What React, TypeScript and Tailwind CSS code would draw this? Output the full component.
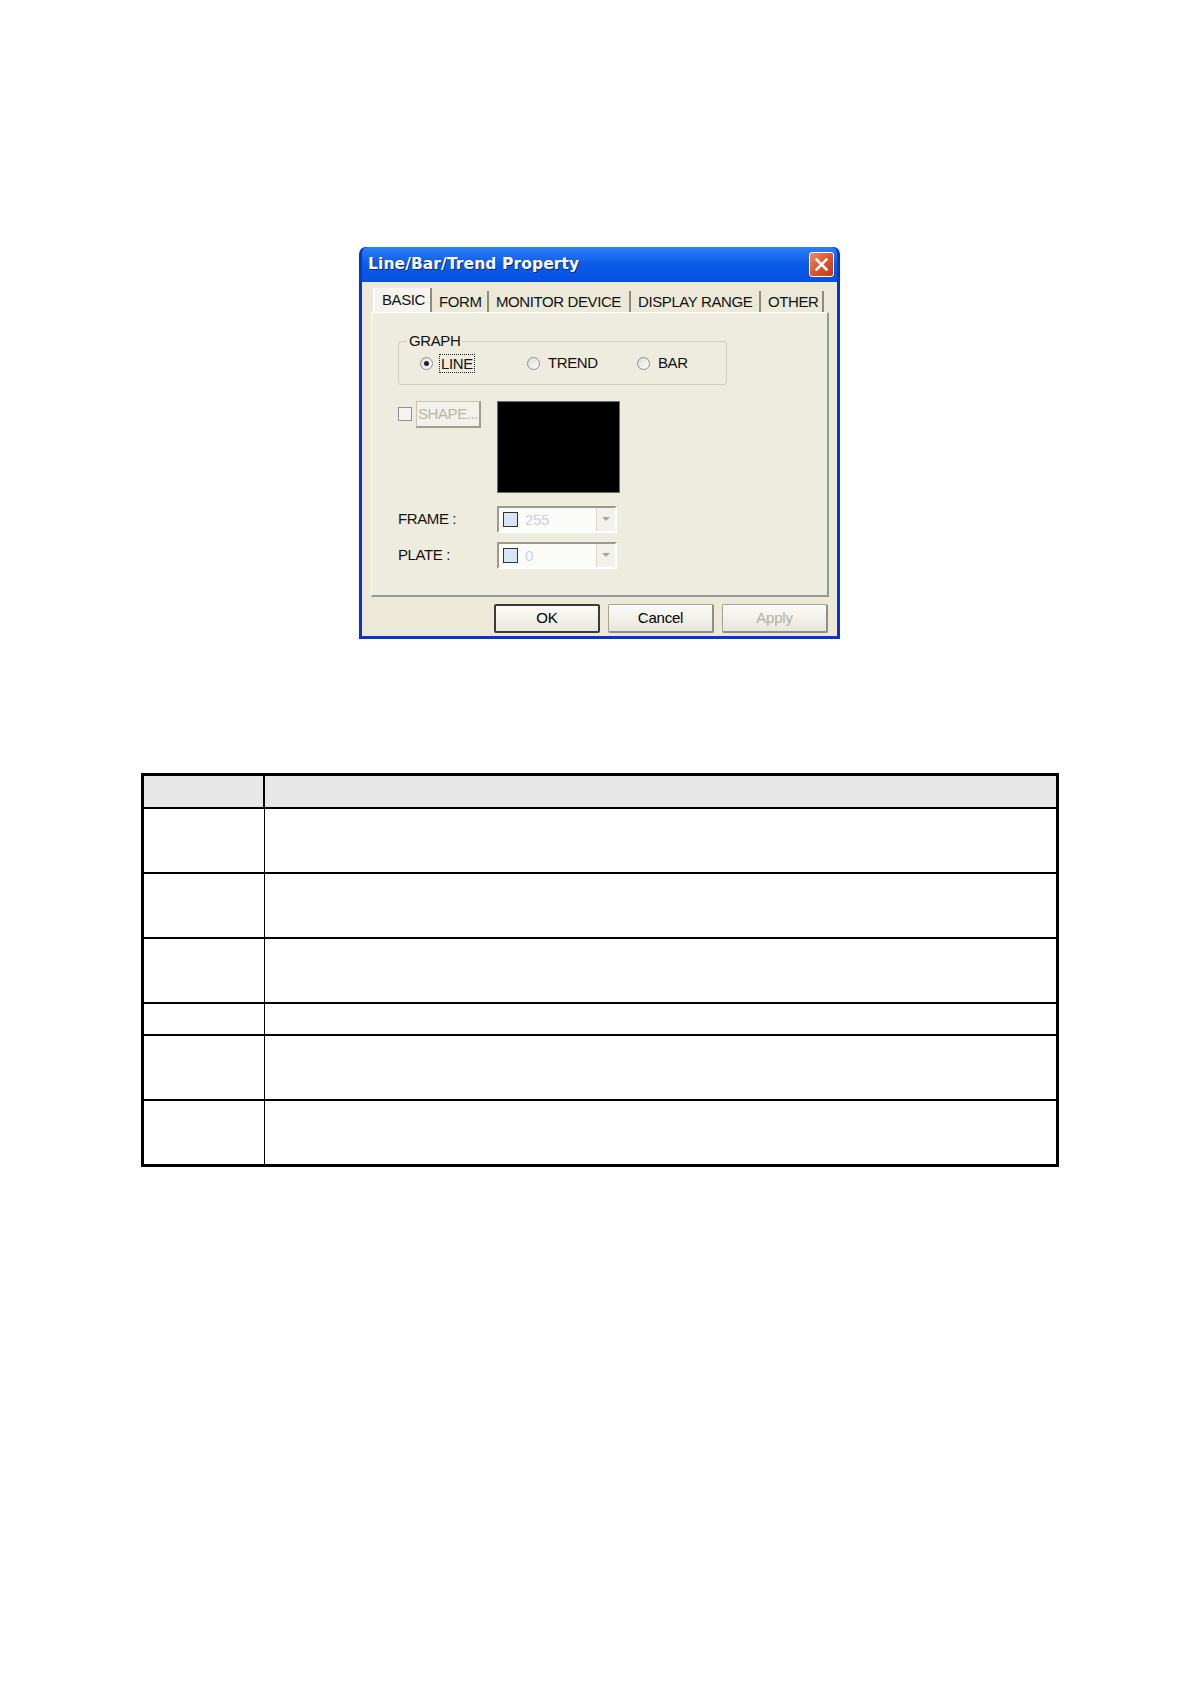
import React from 'react'

const tabs = [
  { label: 'BASIC', w: 59, active: true },
  { label: 'FORM', w: 57 },
  { label: 'MONITOR DEVICE', w: 142 },
  { label: 'DISPLAY RANGE', w: 130 },
  { label: 'OTHER', w: 63 },
]

const rowHeights = [63, 63, 63, 30, 63, 63]

function Radio({ checked }: { checked?: boolean }) {
  return (
    <span className="flex h-[13px] w-[13px] items-center justify-center rounded-full border border-[#8e8f8f] bg-gradient-to-br from-[#dcdcd7] to-white">
      {checked && <span className="h-[5px] w-[5px] rounded-full bg-[#222]" />}
    </span>
  )
}

function ColorCombo({ value }: { value: string }) {
  return (
    <div className="flex h-[27px] w-[120px] items-stretch border-2 border-t-[#9c9a8d] border-l-[#9c9a8d] border-r-[#fff] border-b-[#fff] bg-[#fbfbf8]">
      <div className="flex flex-1 items-center gap-[7px] pl-[4px]">
        <span className="h-[15px] w-[15px] border border-[#333] bg-[#d9e4f6]" />
        <span className="text-[15px] leading-none text-[#c9d1e2]">{value}</span>
      </div>
      <div className="flex w-[19px] items-center justify-center border-l border-[#d8d6c8] bg-[#f2f1eb]">
        <svg width="8" height="5" viewBox="0 0 8 5">
          <path d="M0 0h8L4 4z" fill="#a7a699" />
        </svg>
      </div>
    </div>
  )
}

function Button({ label, primary, disabled }: { label: string; primary?: boolean; disabled?: boolean }) {
  return (
    <div
      className={
        'flex h-[29px] w-[106px] items-center justify-center rounded-[2px] bg-gradient-to-b from-[#fbfbf8] to-[#e9e7dc] text-[15px] tracking-[-0.2px] ' +
        (primary
          ? 'border-2 border-[#3a3a36] text-black'
          : 'border border-[#a4a292] border-r-2 border-b-2 border-r-[#8f8e80] border-b-[#8f8e80] ') +
        (disabled ? ' text-[#b3b1a3]' : ' text-black')
      }
    >
      {label}
    </div>
  )
}

function Dialog() {
  return (
    <div className="ml-[359px] mt-[247px] flex h-[392px] w-[481px] flex-col rounded-t-[7px] border-x-[3px] border-b-[3px] border-[#0835d0] bg-[#0835d0] font-['Liberation_Sans',Arial,sans-serif]">
      <div className="flex h-[35px] items-center justify-between rounded-t-[6px] bg-gradient-to-b from-[#2c7ff7] via-[#0a5be6] to-[#0452e2] pl-[6px] pr-[3px]">
        <span className="font-['DejaVu_Sans',sans-serif] text-[15.5px] font-bold tracking-[0.1px] text-white [text-shadow:1px_1px_0_#0a2a8a]">
          Line/Bar/Trend Property
        </span>
        <span className="flex h-[25px] w-[25px] items-center justify-center rounded-[3px] border border-white bg-gradient-to-br from-[#ea8a68] via-[#de5430] to-[#c13b12]">
          <svg width="13" height="13" viewBox="0 0 13 13">
            <path d="M1.5 1.5l10 10M11.5 1.5l-10 10" stroke="white" strokeWidth="2.6" strokeLinecap="square" />
          </svg>
        </span>
      </div>
      <div className="flex flex-1 flex-col bg-[#ece9d8] px-[9px] pt-[6px] pr-[8px]">
        <div className="flex h-[24px] items-end pl-[2px]">
          {tabs.map((t) => (
            <div
              key={t.label}
              style={{ width: t.w }}
              className={
                'flex items-center border-r-2 border-[#8d8b7e] pl-[7px] text-[15px] tracking-[-0.4px] text-[#111] ' +
                (t.active ? 'h-[24px] items-start border-l-2 border-l-[#fff] bg-[#f5f4ee] pl-[6px] pt-[1px]' : 'h-[21px] pt-[1px]')
              }
            >
              {t.label}
            </div>
          ))}
        </div>
        <div className="h-[285px] border border-r-2 border-b-2 border-[#fff] border-r-[#919b9c] border-b-[#919b9c] bg-[#eeecdf] pl-[26px] pt-[28px] text-[15px] tracking-[-0.4px] text-[#111]">
          <div className="relative flex h-[44px] w-[329px] items-center rounded-[3px] border border-[#cfcdbb] pl-[21px]">
            <span className="absolute left-[8px] top-[-11px] bg-[#eeecdf] px-[2px] leading-[20px]">GRAPH</span>
            <div className="flex w-[107px] items-center gap-[6px]">
              <Radio checked />
              <span className="border border-dotted border-[#222] px-[1px] leading-[17px]">LINE</span>
            </div>
            <div className="flex w-[110px] items-center gap-[8px]">
              <Radio />
              <span>TREND</span>
            </div>
            <div className="flex items-center gap-[8px]">
              <Radio />
              <span>BAR</span>
            </div>
          </div>
          <div className="mt-[16px] grid grid-cols-[99px_123px] gap-y-[9px]">
            <div className="flex items-start gap-[4px]">
              <span className="mt-[6px] h-[14px] w-[14px] border border-[#909090] bg-[#f4f3ee]" />
              <span className="flex h-[27px] w-[65px] items-center justify-center border border-[#c7c5b2] border-r-2 border-b-2 border-r-[#a09e8e] border-b-[#a09e8e] bg-[#f3f2ea] text-[#b8b6a8]">
                SHAPE...
              </span>
            </div>
            <div className="mb-[4px] h-[92px] border border-[#6b6b6b] bg-black" />
            <div className="flex items-center">FRAME :</div>
            <ColorCombo value="255" />
            <div className="flex items-center">PLATE :</div>
            <ColorCombo value="0" />
          </div>
        </div>
        <div className="mt-[7px] flex justify-end gap-[8px] pr-[1px]">
          <Button label="OK" primary />
          <Button label="Cancel" />
          <Button label="Apply" disabled />
        </div>
      </div>
    </div>
  )
}

function Table() {
  return (
    <div className="ml-[141px] mt-[134px] w-[918px] border-[3px] border-black">
      <div className="grid h-[33px] grid-cols-[121px_1fr] border-b-2 border-black bg-[#e7e7e7]">
        <div className="border-r-2 border-black" />
        <div />
      </div>
      {rowHeights.map((h, i) => (
        <div
          key={i}
          style={{ height: h + (i < rowHeights.length - 1 ? 2 : 0) }}
          className={'grid grid-cols-[121px_1fr] ' + (i < rowHeights.length - 1 ? 'border-b-2 border-black' : '')}
        >
          <div className="border-r-[1.5px] border-black" />
          <div />
        </div>
      ))}
    </div>
  )
}

export default function App() {
  return (
    <div className="min-h-[1684px] w-[1191px] overflow-hidden bg-white pt-px">
      <div className="-mt-px">
        <Dialog />
        <Table />
      </div>
    </div>
  )
}
